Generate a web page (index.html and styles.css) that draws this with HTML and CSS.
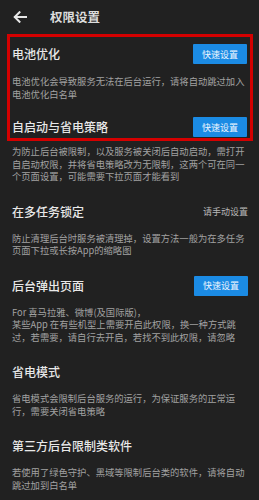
FILE: index.html
```html
<!DOCTYPE html>
<html lang="zh-CN">
<head>
<meta charset="utf-8">
<title>权限设置</title>
<link rel="stylesheet" href="styles.css">
</head>
<body>
<div class="page">
  <header class="topbar">
    <svg class="back" width="14" height="12" viewBox="0 0 14 12" aria-hidden="true">
      <path d="M13 6H2M6.5 1.2L1.7 6l4.8 4.8" fill="none" stroke="#e6e6e6" stroke-width="2" stroke-linecap="square"/>
    </svg>
    <h1 class="title">权限设置</h1>
  </header>

  <div class="box">
    <div class="row first">
      <h2 class="heading">电池优化</h2>
      <span class="btn">快速设置</span>
    </div>
    <p class="desc d-first">电池优化会导致服务无法在后台运行，请将自动跳过加入<br>电池优化白名单</p>
    <div class="row second">
      <h2 class="heading">自启动与省电策略</h2>
      <span class="btn">快速设置</span>
    </div>
  </div>

  <div class="content">
    <p class="desc d-after">为防止后台被限制，以及服务被关闭后自动启动，需打开<br>自启动权限，并将省电策略改为无限制，这两个可在同一<br>个页面设置，可能需要下拉页面才能看到</p>

    <div class="row">
      <h2 class="heading">在多任务锁定</h2>
      <span class="hint">请手动设置</span>
    </div>
    <p class="desc">防止清理后台时服务被清理掉，设置方法一般为在多任务<br>页面下拉或长按App的缩略图</p>

    <div class="row">
      <h2 class="heading">后台弹出页面</h2>
      <span class="btn">快速设置</span>
    </div>
    <p class="desc">For 喜马拉雅、微博(及国际版)，<br>某些App 在有些机型上需要开启此权限，换一种方式跳<br>过，若需要，请自行去开启，若找不到此权限，请忽略</p>

    <div class="row">
      <h2 class="heading">省电模式</h2>
    </div>
    <p class="desc">省电模式会限制后台服务的运行，为保证服务的正常运<br>行，需要关闭省电策略</p>

    <div class="row">
      <h2 class="heading">第三方后台限制类软件</h2>
    </div>
    <p class="desc">若使用了绿色守护、黑域等限制后台类的软件，请将自动<br>跳过加到白名单</p>
  </div>
</div>
</body>
</html>
```

FILE: styles.css
```css
* {
  box-sizing: border-box;
  margin: 0;
  padding: 0;
}

html, body {
  background: #212121;
}

body {
  width: 259px;
  height: 500px;
  overflow: hidden;
  font-family: "Noto Sans CJK SC", "Noto Sans", sans-serif;
  color: #e6e6e6;
}

.page {
  width: 259px;
  height: 500px;
}

.topbar {
  height: 34px;
  display: flex;
  align-items: center;
  padding-left: 13px;
  padding-bottom: 1px;
}

.back {
  display: block;
  margin-right: 23px;
}

.title {
  font-size: 12.5px;
  font-weight: 700;
  color: #dcdcdc;
  line-height: 16px;
}

.box {
  margin-left: 7px;
  width: 246px;
  border: 3px solid #d40000;
  padding: 7px 3px 1px 2px;
}

.row {
  display: flex;
  justify-content: space-between;
  align-items: center;
  height: 20px;
  margin-top: 19px;
}

.row.first {
  margin-top: 0;
}

.row.second {
  margin-top: 17px;
}

.heading {
  font-size: 12px;
  font-weight: 500;
  line-height: 16px;
  color: #e8e8e8;
}

.btn {
  width: 54px;
  height: 20px;
  display: flex;
  align-items: center;
  justify-content: center;
  background: #1b8be4;
  color: #eef6ff;
  font-size: 9px;
  border-radius: 1px;
  line-height: 1;
}

.hint {
  font-size: 9px;
  color: #b8b8b8;
  line-height: 12px;
}

.content {
  padding: 0 11px 0 12px;
}

.desc {
  font-size: 9.3px;
  line-height: 12.5px;
  color: #a2a2a2;
  margin-top: 10px;
  white-space: nowrap;
}

.desc.d-first {
  margin-top: 11px;
}

.desc.d-after {
  margin-top: 4px;
}
```
